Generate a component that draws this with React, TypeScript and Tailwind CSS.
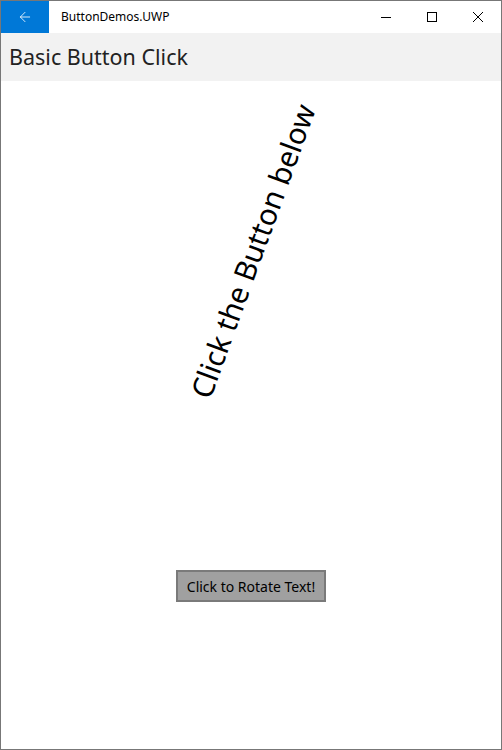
import { ArrowLeft } from 'lucide-react';

const ui = { fontFamily: '"Noto Sans", "Open Sans", sans-serif' };

function TitleBar() {
  return (
    <div className="flex h-8 items-stretch bg-white">
      <div className="flex w-12 items-center justify-center bg-[#0078d7] text-white">
        <ArrowLeft className="h-4 w-4" strokeWidth={1.25} />
      </div>
      <div className="flex flex-1 items-center pl-3 text-[12px] text-black">ButtonDemos.UWP</div>
      {/* caption buttons */}
      <div className="flex">
        <div className="flex w-[46px] items-center justify-center">
          <svg width="10" height="10" viewBox="0 0 10 10">
            <path d="M0 5.5h10" stroke="#000" strokeWidth="1" />
          </svg>
        </div>
        <div className="flex w-[46px] items-center justify-center">
          <svg width="10" height="10" viewBox="0 0 10 10">
            <rect x="0.5" y="0.5" width="9" height="9" fill="none" stroke="#000" strokeWidth="1" />
          </svg>
        </div>
        <div className="flex w-[46px] items-center justify-center">
          <svg width="10" height="10" viewBox="0 0 10 10">
            <path d="M0 0L10 10M10 0L0 10" stroke="#000" strokeWidth="1" />
          </svg>
        </div>
      </div>
    </div>
  );
}

export default function App() {
  return (
    <div className="flex h-[750px] w-[502px] flex-col border border-[#777] bg-white" style={ui}>
      <TitleBar />
      <div className="flex h-12 items-center bg-[#f2f2f2] pl-2 text-[21.5px] text-[#222]">Basic Button Click</div>

      <div className="flex flex-1 flex-col items-center">
        {/* rotated caption */}
        <div className="flex h-[340px] w-full items-center justify-center pl-[4px]">
          <div className="-rotate-[70deg] whitespace-nowrap text-[29.5px] text-black">Click the Button below</div>
        </div>
        <button className="mt-[149px] h-8 w-[150px] border-2 border-[#7a7a7a] bg-[#a0a0a0] text-[14px] text-black">
          Click to Rotate Text!
        </button>
      </div>
    </div>
  );
}
